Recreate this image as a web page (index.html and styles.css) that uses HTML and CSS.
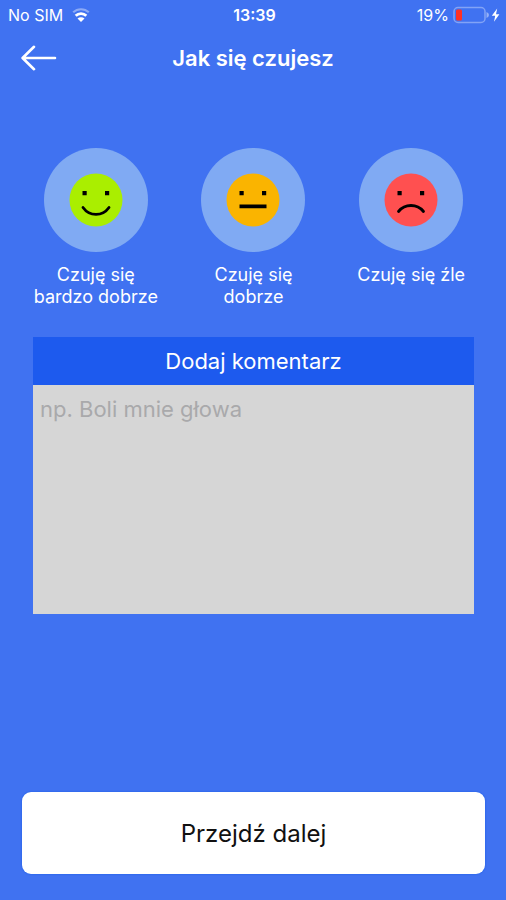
FILE: index.html
```html
<!DOCTYPE html>
<html lang="pl">
<head>
<meta charset="utf-8">
<meta name="viewport" content="width=device-width, initial-scale=1">
<title>Jak się czujesz</title>
<link rel="stylesheet" href="styles.css">
</head>
<body>
<div class="screen">
  <div class="status">
    <div class="status-left">
      <span>No SIM</span>
      <svg class="wifi" width="18" height="14" viewBox="0 0 18 14" aria-hidden="true">
        <path d="M1.200 4.300a11.500 11.500 0 0 1 15.600 0" fill="none" stroke="#fff" stroke-opacity=".4" stroke-width="2.200"/>
        <path d="M3.700 7.700a7.600 7.600 0 0 1 10.600 0" fill="none" stroke="#fff" stroke-width="2.800"/>
        <path d="M9 14 5.500 10.600a5 5 0 0 1 7 0z" fill="#fff"/>
      </svg>
    </div>
    <span class="clock">13:39</span>
    <div class="status-right">
      <span>19%</span>
      <svg width="48" height="18" viewBox="0 0 48 18" aria-hidden="true">
        <rect x="1" y="1.500" width="31" height="15" rx="4" fill="none" stroke="#fff" stroke-opacity=".35" stroke-width="1.500"/>
        <path d="M33.500 6q2.500 1 2.500 3t-2.500 3z" fill="#fff" fill-opacity=".45"/>
        <rect x="3" y="3.500" width="6" height="11" rx="1.500" fill="#ff3024"/>
        <path d="M44.200 2.500 38.800 9.800h3.400l-1.200 6L46.400 8.200h-3.400z" fill="#fff"/>
      </svg>
    </div>
  </div>

  <header class="topbar">
    <button class="back" type="button" aria-label="Wstecz">
      <svg width="36" height="26" viewBox="0 0 36 26" fill="none" stroke="#fff" stroke-width="2.600" stroke-linecap="round" stroke-linejoin="round" aria-hidden="true">
        <path d="M34 13H2M13 1.800 1.600 13 13 24.200"/>
      </svg>
    </button>
    <h1 class="title">Jak się czujesz</h1>
  </header>

  <main class="content">
    <div class="moods">
      <button class="mood" type="button">
        <span class="halo">
          <svg class="face" viewBox="0 0 54 54" aria-hidden="true">
            <circle cx="27" cy="27" r="26.500" fill="#aaee00"/>
            <path d="M13.500 18h4.200v4.200h-4.200zM36 18h4.200v4.200H36z"/>
            <path d="M14 34.500c6.500 9.200 19.500 9.200 26 0" fill="none" stroke="#000" stroke-width="2.800" stroke-linecap="round"/>
          </svg>
        </span>
        <span class="mood-label">Czuję się<br>bardzo dobrze</span>
      </button>
      <button class="mood" type="button">
        <span class="halo">
          <svg class="face" viewBox="0 0 54 54" aria-hidden="true">
            <circle cx="27" cy="27" r="26.500" fill="#fab400"/>
            <path d="M13.500 18h4.200v4.200h-4.200zM36 18h4.200v4.200H36zM13.500 31.500h27v3.800h-27z"/>
          </svg>
        </span>
        <span class="mood-label">Czuję się<br>dobrze</span>
      </button>
      <button class="mood" type="button">
        <span class="halo">
          <svg class="face" viewBox="0 0 54 54" aria-hidden="true">
            <circle cx="27" cy="27" r="26.500" fill="#ff5050"/>
            <path d="M13.500 18h4.200v4.200h-4.200zM36 18h4.200v4.200H36z"/>
            <path d="M14.500 38.500c6.500-8 18.500-8 25 0" fill="none" stroke="#000" stroke-width="2.800" stroke-linecap="round"/>
          </svg>
        </span>
        <span class="mood-label">Czuję się źle</span>
      </button>
    </div>

    <div class="comment">
      <label class="comment-title" for="comment">Dodaj komentarz</label>
      <textarea class="comment-box" id="comment" placeholder="np. Boli mnie głowa"></textarea>
    </div>
  </main>

  <footer class="footer">
    <button class="next" type="button">Przejdź dalej</button>
  </footer>
</div>
</body>
</html>
```
FILE: styles.css
```css
* {
  box-sizing: border-box;
}

body {
  margin: 0;
  background: #4072f1;
  color: #fff;
  font-family: Inter, "Liberation Sans", sans-serif;
}

button,
textarea {
  font: inherit;
  color: inherit;
  border: 0;
}

button {
  padding: 0;
  background: none;
}

.screen {
  display: flex;
  flex-direction: column;
  min-height: 100vh;
}

.status {
  display: grid;
  grid-template-columns: 1fr auto 1fr;
  align-items: center;
  height: 29px;
  padding: 0 5px 0 8px;
  font-size: 16px;
}

.status-left,
.status-right {
  display: flex;
  align-items: center;
  gap: 9px;
}

.status-right {
  justify-content: flex-end;
  gap: 4px;
}

.clock {
  font-weight: 600;
}

.topbar {
  display: grid;
  grid-template-columns: 1fr auto 1fr;
  align-items: center;
  height: 57px;
  padding: 0 21px;
}

.back {
  display: flex;
  justify-self: start;
}

.title {
  margin: 0;
  font-size: 22px;
  font-weight: 600;
}

.content {
  flex: 1;
}

.moods {
  display: grid;
  grid-template-columns: repeat(3, 1fr);
  padding: 62px 16px 0 17px;
}

.mood {
  display: flex;
  flex-direction: column;
  align-items: center;
  gap: 12px;
}

.halo {
  display: flex;
  align-items: center;
  justify-content: center;
  width: 104px;
  height: 104px;
  border-radius: 50%;
  background: #80aaf3;
}

.face {
  width: 54px;
  height: 54px;
}

.mood-label {
  font-size: 18px;
  line-height: 22px;
}

.comment {
  display: flex;
  flex-direction: column;
  margin: 29px 32px 0 33px;
}

.comment-title {
  background: #1d5aee;
  font-size: 22px;
  line-height: 48px;
  text-align: center;
}

.comment-box {
  height: 229px;
  padding: 10px 7px;
  border-radius: 0;
  background: #d6d6d6;
  color: #222;
  font-size: 22px;
  line-height: 28px;
  resize: none;
}

.comment-box::placeholder {
  color: #a9a9ab;
  opacity: 1;
}

.footer {
  padding: 26px 21px 26px 22px;
}

.next {
  width: 100%;
  height: 82px;
  border-radius: 9px;
  background: #fff;
  box-shadow: 0 0 2px #1258e6;
  color: #111;
  font-size: 24px;
}
```
